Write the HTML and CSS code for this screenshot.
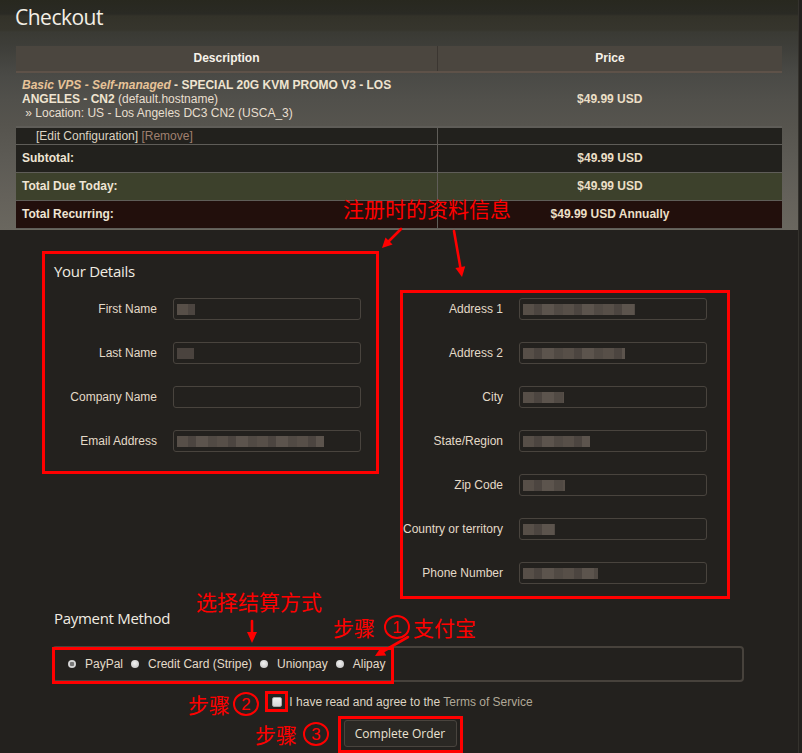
FILE: index.html
```html
<!DOCTYPE html>
<html lang="en">
<head>
<meta charset="utf-8">
<title>Checkout</title>
<link rel="stylesheet" href="styles.css">
</head>
<body>
<div class="page">
  <header class="top">
    <h1 class="title">Checkout</h1>
    <table class="cart">
      <thead>
        <tr><th class="c-desc">Description</th><th class="c-price">Price</th></tr>
      </thead>
      <tbody>
        <tr class="r-item">
          <td><em class="pgroup">Basic VPS - Self-managed</em> <strong class="pname">- SPECIAL 20G KVM PROMO V3 - LOS ANGELES - CN2</strong> (default.hostname)<br>&nbsp;» Location: US - Los Angeles DC3 CN2 (USCA_3)</td>
          <td class="price price-item">$49.99 USD</td>
        </tr>
        <tr class="r-edit">
          <td><span class="edit">[Edit Configuration]</span> <span class="remove">[Remove]</span></td>
          <td class="price"></td>
        </tr>
        <tr class="r-total r-sub"><td>Subtotal:</td><td class="price">$49.99 USD</td></tr>
        <tr class="r-total r-due"><td>Total Due Today:</td><td class="price">$49.99 USD</td></tr>
        <tr class="r-total r-rec"><td>Total Recurring:</td><td class="price">$49.99 USD Annually</td></tr>
      </tbody>
    </table>
  </header>

  <section class="details">
    <div class="box box-you">
      <h2 class="heading">Your Details</h2>
      <div class="field"><label>First Name</label><div class="input"><span class="blur w-fn"></span></div></div>
      <div class="field"><label>Last Name</label><div class="input"><span class="blur w-ln"></span></div></div>
      <div class="field"><label>Company Name</label><div class="input"></div></div>
      <div class="field"><label>Email Address</label><div class="input"><span class="blur w-em"></span></div></div>
    </div>
    <div class="box box-addr">
      <div class="field"><label>Address 1</label><div class="input"><span class="blur w-a1"></span></div></div>
      <div class="field"><label>Address 2</label><div class="input"><span class="blur w-a2"></span></div></div>
      <div class="field"><label>City</label><div class="input"><span class="blur w-ci"></span></div></div>
      <div class="field"><label>State/Region</label><div class="input"><span class="blur w-st"></span></div></div>
      <div class="field"><label>Zip Code</label><div class="input"><span class="blur w-zp"></span></div></div>
      <div class="field"><label>Country or territory</label><div class="input"><span class="blur w-co"></span></div></div>
      <div class="field"><label>Phone Number</label><div class="input"><span class="blur w-ph"></span></div></div>
    </div>
  </section>

  <section class="payment">
    <h2 class="heading pay-heading">Payment Method</h2>
    <div class="methods">
      <span class="opt"><span class="radio checked"></span>PayPal</span>
      <span class="opt"><span class="radio"></span>Credit Card (Stripe)</span>
      <span class="opt"><span class="radio"></span>Unionpay</span>
      <span class="opt"><span class="radio"></span>Alipay</span>
      <span class="mark-methods"></span>
    </div>
  </section>

  <div class="tos">
    <span class="mark-check"><span class="checkbox"></span></span><span class="tos-text">I have read and agree to the <span class="tos-link">Terms of Service</span></span>
  </div>

  <div class="submit">
    <span class="mark-btn"><button class="btn" type="button">Complete Order</button></span>
  </div>

  <div class="note note-info">注册时的资料信息</div>
  <div class="note note-pay">选择结算方式</div>
  <div class="note note-s1">步骤<span class="circ">1</span>支付宝</div>
  <div class="note note-s2">步骤<span class="circ">2</span></div>
  <div class="note note-s3">步骤<span class="circ">3</span></div>

  <svg class="arrows" width="802" height="753" viewBox="0 0 802 753" aria-hidden="true">
    <g stroke="#ff0000" stroke-width="2.6" stroke-linecap="round" fill="none">
      <line x1="401" y1="229" x2="389" y2="241"/>
      <line x1="454" y1="231" x2="460.3" y2="267"/>
      <line x1="252" y1="621" x2="252" y2="633"/>
      <line x1="408" y1="637" x2="383.7" y2="651"/>
    </g>
    <g fill="#ff0000">
      <polygon points="382,248 392.6,244.5 385.5,237.4"/>
      <polygon points="462,277 465.2,266.3 455.4,268"/>
      <polygon points="252,643 257,632 247,632"/>
      <polygon points="375,656 386.2,655.4 381.2,646.7"/>
    </g>
  </svg>
</div>
</body>
</html>
```

FILE: styles.css
```css
html, body {
  margin: 0;
  padding: 0;
}

body {
  background: #23211e;
  font-family: "Liberation Sans", Arial, sans-serif;
  font-size: 12px;
  color: #e3d9c7;
}

.page {
  position: relative;
  width: 798px;
  min-height: 753px;
  border-right: 1px solid #34322d;
  overflow: hidden;
}

/* ---------- top / cart ---------- */
.top {
  height: 230px;
  box-sizing: border-box;
  padding-top: 3px;
  background: linear-gradient(to bottom,
    #28281f 0px, #2a2a24 14px, #333229 16px, #36352d 30px,
    #3a3a34 32px, #3e3e39 46px, #4a4a46 75px, #51504b 100px,
    #56544e 125px, #5d5b55 160px, #64615a 195px, #6a675f 230px);
}

.title {
  margin: 0 0 15px 15px;
  font-family: "Open Sans", "Liberation Sans", sans-serif;
  font-weight: 400;
  font-size: 21px;
  line-height: 28px;
  letter-spacing: -0.5px;
  color: #f3efe6;
}

.cart {
  margin-left: 16px;
  width: 766px;
  border-collapse: collapse;
  table-layout: fixed;
}

.cart th {
  background: #4b463f;
  color: #f7f2ea;
  font-weight: bold;
  font-size: 12px;
  line-height: 15px;
  padding: 5px 6px 5px;
  border-bottom: 2px solid #5e5249;
  text-align: center;
}

.cart .c-desc { width: 409px; }
.cart .c-price { border-left: 1px solid #3b3631; }

.cart td {
  padding: 6px;
  line-height: 15px;
  vertical-align: middle;
  border-top: 1px solid #5f5d58;
}

.cart td.price {
  text-align: center;
  font-weight: bold;
  color: #ebdfc6;
  border-left: 1px solid #5f5d58;
}

.r-item td {
  padding: 6px;
  line-height: 13.8px;
  border-top: none;
  color: #e8dfcf;
}

.r-item td.price { border-left: none; }

.pgroup {
  font-weight: bold;
  color: #e7c398;
}

.pname {
  color: #efe4d0;
}

.cart .price-item {
  color: #e4cb9c;
}

.r-edit td {
  background: #22211d;
  padding: 1px 6px 1px 20px;
  line-height: 14px;
  border-top: 2px solid #5f5d58;
}

.edit { color: #ddd4c2; }
.remove { color: #a0806f; }

.r-total td {
  font-weight: bold;
  color: #efe5d4;
  background: #22211d;
}

.r-due td { background: #3d412c; }
.r-rec td {
  background: #220f0c;
  border-bottom: 1px solid #5f5d58;
}

/* ---------- details ---------- */
.details {
  display: flex;
  align-items: flex-start;
  padding: 21px 0 0 42px;
}

.box {
  border: 3px solid #ff0000;
  box-sizing: border-box;
}

.box-you {
  width: 337px;
  padding: 7px 15px 19px 12px;
}

.box-addr {
  width: 330px;
  margin-left: 21px;
  margin-top: 39px;
  padding: 5px 20px 12px 0;
}

.heading {
  margin: 0;
  font-family: "Open Sans", "Liberation Sans", sans-serif;
  font-weight: 400;
  font-size: 15px;
  line-height: 20px;
  letter-spacing: -0.3px;
  color: #f1ece2;
}

.box-you .heading {
  margin-bottom: 17px;
  margin-left: -3px;
}

.field {
  display: flex;
  align-items: center;
  gap: 16px;
  height: 22px;
}

.field + .field { margin-top: 22px; }

.field label {
  width: 100px;
  flex: none;
  text-align: right;
  white-space: nowrap;
  color: #e4dac8;
}

.input {
  width: 188px;
  height: 22px;
  box-sizing: border-box;
  border: 1px solid #49443e;
  border-radius: 3px;
  background: #23211e;
  display: flex;
  align-items: center;
  padding-left: 3px;
}

.blur {
  display: block;
  height: 11px;
  background: repeating-linear-gradient(90deg,
    #574f48 0 11px, #4c4540 11px 19px, #5c544d 19px 31px, #514a44 31px 40px);
}

.w-fn { width: 18px; }
.w-ln { width: 17px; background: #4a433e; }
.w-em { width: 147px; }
.w-a1 { width: 112px; }
.w-a2 { width: 102px; }
.w-ci { width: 41px; }
.w-st { width: 67px; }
.w-zp { width: 42px; }
.w-co { width: 32px; }
.w-ph { width: 75px; }

/* ---------- payment ---------- */
.payment {
  padding-left: 52px;
  margin-top: 9px;
}

.pay-heading {
  padding-left: 2px;
}

.methods {
  position: relative;
  margin-top: 18px;
  width: 692px;
  height: 36px;
  box-sizing: border-box;
  border: 2px solid #47423c;
  border-radius: 4px;
  display: flex;
  align-items: center;
  padding-left: 14px;
  color: #e4dbc9;
}

.opt {
  display: flex;
  align-items: center;
  gap: 9px;
  margin-right: 8px;
}

.radio {
  width: 8px;
  height: 8px;
  border-radius: 50%;
  background: radial-gradient(circle at 45% 40%, #f2f2f2 0, #d2d2d2 60%, #b4b4b4 100%);
}

.radio.checked {
  background: radial-gradient(circle, #777 0 2px, #dadada 2.6px, #bdbdbd 100%);
}

.mark-methods {
  position: absolute;
  left: -2px;
  top: -1px;
  width: 342px;
  height: 37px;
  box-sizing: border-box;
  border: 3px solid #ff0000;
}

/* ---------- terms & submit ---------- */
.tos {
  margin-top: 9px;
  display: flex;
  justify-content: center;
  align-items: center;
  height: 21px;
  color: #ddd4c3;
}

.mark-check {
  display: flex;
  box-sizing: border-box;
  width: 23px;
  height: 21px;
  border: 3px solid #ff0000;
  padding: 3px 0 0 4px;
  margin-right: 1px;
}

.checkbox {
  width: 10px;
  height: 10px;
  box-sizing: border-box;
  border: 1px solid #a9a9a9;
  border-radius: 2px;
  background: linear-gradient(#f0f0f0, #d6d6d6);
}

.tos-link { color: #b0a897; }

.submit {
  margin-top: 4px;
  text-align: center;
}

.mark-btn {
  display: inline-block;
  border: 3px solid #ff0000;
  padding: 1px 3px 3px;
  margin-left: 2px;
}

.btn {
  display: block;
  width: 113px;
  height: 27px;
  margin: 0;
  padding: 0;
  border: 1px solid #49443e;
  border-radius: 3px;
  background: #2a2824;
  color: #ebe3d3;
  font-family: "Open Sans", "Liberation Sans", sans-serif;
  font-size: 12px;
}

/* ---------- annotations ---------- */
.note {
  position: absolute;
  font-family: "Noto Sans CJK SC", "Noto Sans", sans-serif;
  font-size: 21px;
  line-height: 1;
  color: #ff0000;
  white-space: nowrap;
  display: flex;
  align-items: center;
}

.note-info { left: 343px; top: 198px; }
.note-pay { left: 196px; top: 591px; }
.note-s1 { left: 333px; top: 615px; }
.note-s2 { left: 188px; top: 692px; }
.note-s3 { left: 255px; top: 722px; }

.circ {
  display: inline-flex;
  justify-content: center;
  align-items: center;
  width: 26px;
  height: 24px;
  box-sizing: border-box;
  border: 2.5px solid #ff0000;
  border-radius: 50%;
  font-family: "Liberation Sans", Arial, sans-serif;
  font-size: 17px;
  line-height: 1;
}

.note-s1 .circ { margin: 0 3px 0 9px; }
.note-s2 .circ { margin-left: 3px; }
.note-s3 .circ { margin-left: 6px; }

.arrows {
  position: absolute;
  left: 0;
  top: 0;
  pointer-events: none;
}
```
